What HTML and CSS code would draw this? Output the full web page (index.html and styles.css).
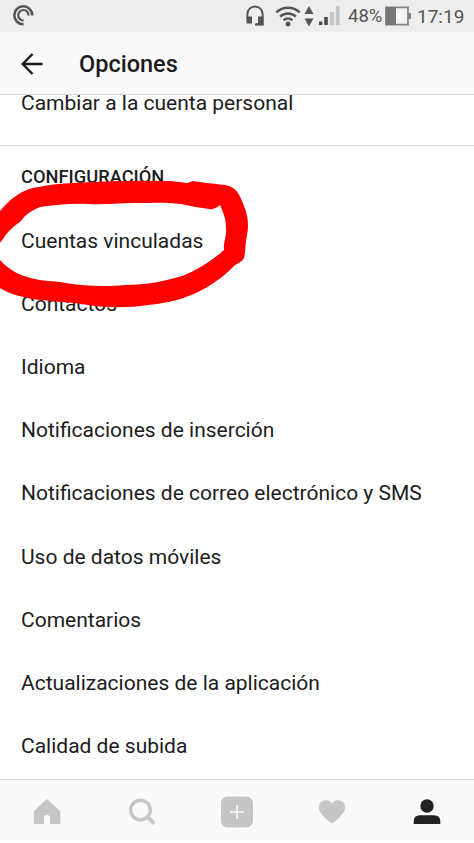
FILE: index.html
```html
<!DOCTYPE html>
<html lang="es">
<head>
    <meta charset="UTF-8">
    <meta name="viewport" content="width=device-width, initial-scale=1.0">
    <title>Opciones</title>
    <link rel="stylesheet" href="styles.css">
</head>
<body>
    <div class="screen">
        <!-- Status bar -->
        <div class="status-bar">
            <svg class="status-app" width="22" height="22" viewBox="0 0 22 22" fill="none" stroke="#555">
                <path d="M19.3 10.5A9 9 0 1 0 10.5 19.3" stroke-width="2.6"/>
                <path d="M15.6 10.5A5.2 5.2 0 1 0 10.5 15.4" stroke-width="2.2"/>
            </svg>
            <svg class="status-headset" width="18" height="22" viewBox="0 0 18 22">
                <path d="M1.4 14V9a7.6 7.6 0 0 1 15.2 0v10.2H10" fill="none" stroke="#555" stroke-width="2"/>
                <path d="M.5 11.5H6v7H.5zM12 11.5h5.500v7H12zM9 18.5h8.500v2H9z" fill="#555"/>
            </svg>
            <svg class="status-wifi" width="26" height="22" viewBox="0 0 26 22">
                <path d="M1.3 7.4a17 17 0 0 1 23.4 0M5 11.7a11.5 11.5 0 0 1 16 0M8.6 15.3a6.5 6.5 0 0 1 8.8 0" fill="none" stroke="#555" stroke-width="2.5"/>
                <circle cx="13" cy="19" r="2.5" fill="#555"/>
            </svg>
            <svg class="status-data" width="10" height="22" viewBox="0 0 10 22" fill="#555">
                <path d="M5 1l4.5 8h-9zM5 21.5L.5 13.5h9z"/>
            </svg>
            <svg class="status-signal" width="21" height="22" viewBox="0 0 21 22">
                <path d="M0 16.5h3.4V20H0zM5.2 12h3.6v8H5.2z" fill="#4c4c4c"/>
                <path d="M11 7h4v13h-4zM16.8 1h3.8v19h-3.8z" fill="#c6c6c6"/>
            </svg>
            <span class="status-percent">48%</span>
            <svg class="status-battery" width="27" height="20" viewBox="0 0 27 20">
                <path d="M1 1.3h22v17.4H1z" fill="#f4f4f4" stroke="#858585" stroke-width="1.8"/>
                <path d="M1 1h10v18H1z" fill="#777"/>
                <path d="M23.5 7H26v6h-2.500z" fill="#777"/>
            </svg>
            <span class="status-time">17:19</span>
        </div>

        <!-- Title bar -->
        <div class="header">
            <svg class="back" width="22" height="22" viewBox="0 0 22 22" fill="none" stroke="#1a1a1a" stroke-width="2.4">
                <path d="M21.5 11H2M11.5 1L1.7 11l9.8 10"/>
            </svg>
            <h1>Opciones</h1>
        </div>

        <div class="content">
            <div class="option first">Cambiar a la cuenta personal</div>
            <h2>CONFIGURACIÓN</h2>
            <div class="option">Cuentas vinculadas</div>
            <div class="option">Contactos</div>
            <div class="option">Idioma</div>
            <div class="option">Notificaciones de inserción</div>
            <div class="option">Notificaciones de correo electrónico y SMS</div>
            <div class="option">Uso de datos móviles</div>
            <div class="option">Comentarios</div>
            <div class="option">Actualizaciones de la aplicación</div>
            <div class="option">Calidad de subida</div>
        </div>

        <!-- Bottom navigation -->
        <div class="nav">
            <div class="nav-item">
                <svg width="28" height="26" viewBox="0 0 28 26" fill="#c6c6c6">
                    <path d="M14 0L.8 12.2V24q0 1 1 1H11v-6.500q0-2.500 3-2.500t3 2.500V25h9.400q1 0 1-1V12.200z"/>
                </svg>
            </div>
            <div class="nav-item">
                <svg width="28" height="28" viewBox="0 0 28 28" fill="none" stroke="#c6c6c6">
                    <circle cx="12.5" cy="12" r="9.8" stroke-width="3.4"/>
                    <path d="M19 18.5l7.200 7.200" stroke-width="4"/>
                </svg>
            </div>
            <div class="nav-item">
                <svg width="32" height="32" viewBox="0 0 32 32">
                    <rect x="0" y="0.5" width="32" height="31" rx="6.5" fill="#c6c6c6"/>
                    <path d="M16 9v14M9 16h14" stroke="#fafafa" stroke-width="1.5"/>
                </svg>
            </div>
            <div class="nav-item">
                <svg width="28" height="26" viewBox="0 0 28 26" fill="#c6c6c6">
                    <path d="M14 24.5C12.5 23.5 1 15.5 1 8.200A6.900 6.900 0 0 1 14 5a6.900 6.900 0 0 1 13 3.200C27 15.500 15.500 23.500 14 24.500z"/>
                </svg>
            </div>
            <div class="nav-item">
                <svg width="28" height="26" viewBox="0 0 28 26" fill="#222">
                    <circle cx="14" cy="7" r="6.7"/>
                    <path d="M.7 25v-2.500q0-6.300 6.500-6.300h13.600q6.500 0 6.500 6.300V25z"/>
                </svg>
            </div>
        </div>

        <!-- Hand-drawn highlight over the list -->
        <svg class="marker" width="260" height="140" viewBox="0 180 260 140" fill="#fe0000">
            <path fill-rule="evenodd" d="M-6 217L0 211C4 206 8 202 13 198C20 193 28 188 39 187C56 183 73 183 93 182Q130 180 165 181C177 181 183 183 188 183C190 181 195 181 200 182C212 184 222 184 229 186C238 189 241 198 244 206C248 215 249 226 247 235C245 243 246 251 244 258C240 264 236 263 232 268C224 276 213 284 202 290C185 299 168 303 148 305C130 308 106 308 88 305C70 302 46 301 32 299C19 296 9 294 0 288L-6 284V258L0 260C6 267 15 273 24 276C35 280 48 281 60 282C80 286 105 287 125 285C147 285 165 281 182 276C197 270 212 261 224 250C223 242 227 236 226 228C226 218 223 212 220 205C217 207 214 210 209 209C200 208 191 206 181 204C165 202 148 203 133 203C116 203 103 205 89 204C70 203 56 205 40 207C29 212 25 215 21 221C13 227 7 232 3 239L-6 250z"/>
        </svg>
    </div>
</body>
</html>
```
FILE: styles.css
```css
* {
    box-sizing: border-box;
}
body {
    margin: 0;
    background-color: #fff;
    color: #1c1c1c;
    font-family: Roboto, "Liberation Sans", sans-serif;
}
.screen {
    position: relative;
    display: flex;
    flex-direction: column;
    height: 843px;
    overflow: hidden;
    padding-bottom: 3px;
}
h1,
h2 {
    margin: 0;
    font-weight: 500;
}

/* Status bar */
.status-bar {
    display: flex;
    align-items: center;
    flex: none;
    height: 32px;
    padding-left: 13px;
    background-color: #eee;
    color: #555;
}
.status-headset {
    margin-left: 211px;
}
.status-wifi {
    margin-left: 11px;
}
.status-data {
    margin-left: 3px;
}
.status-signal {
    margin-left: 5px;
}
.status-percent {
    width: 36px;
    margin-left: 8px;
    font-size: 18.5px;
}
.status-battery {
    margin-left: 1px;
}
.status-time {
    margin-left: 5px;
    font-size: 19px;
}

/* Title bar */
.header {
    display: flex;
    align-items: center;
    flex: none;
    height: 63px;
    padding-top: 1px;
    padding-left: 21px;
    background-color: #fafafa;
    border-bottom: 1px solid #d8d8d8;
}
.header h1 {
    margin-left: 36px;
    font-size: 23.5px;
}

/* Options list, scrolled under the title bar */
.content {
    flex: 1;
    min-height: 0;
}
.option {
    display: flex;
    align-items: center;
    height: 63.2px;
    padding-left: 21px;
    font-size: 21px;
    white-space: nowrap;
}
.option.first {
    height: 51px;
    padding-bottom: 34px;
    border-bottom: 1px solid #dedede;
    line-height: 16px;
}
h2 {
    height: 63px;
    padding-left: 21px;
    font-size: 18.3px;
    line-height: 62px;
}

/* Bottom navigation */
.nav {
    display: flex;
    flex: none;
    height: 61px;
    padding-top: 3px;
    background-color: #fafafa;
    border-top: 1px solid #d8d8d8;
}
.nav-item {
    display: flex;
    flex: 1;
    align-items: center;
    justify-content: center;
}

.marker {
    position: absolute;
    left: 0;
    top: 180px;
}
```
